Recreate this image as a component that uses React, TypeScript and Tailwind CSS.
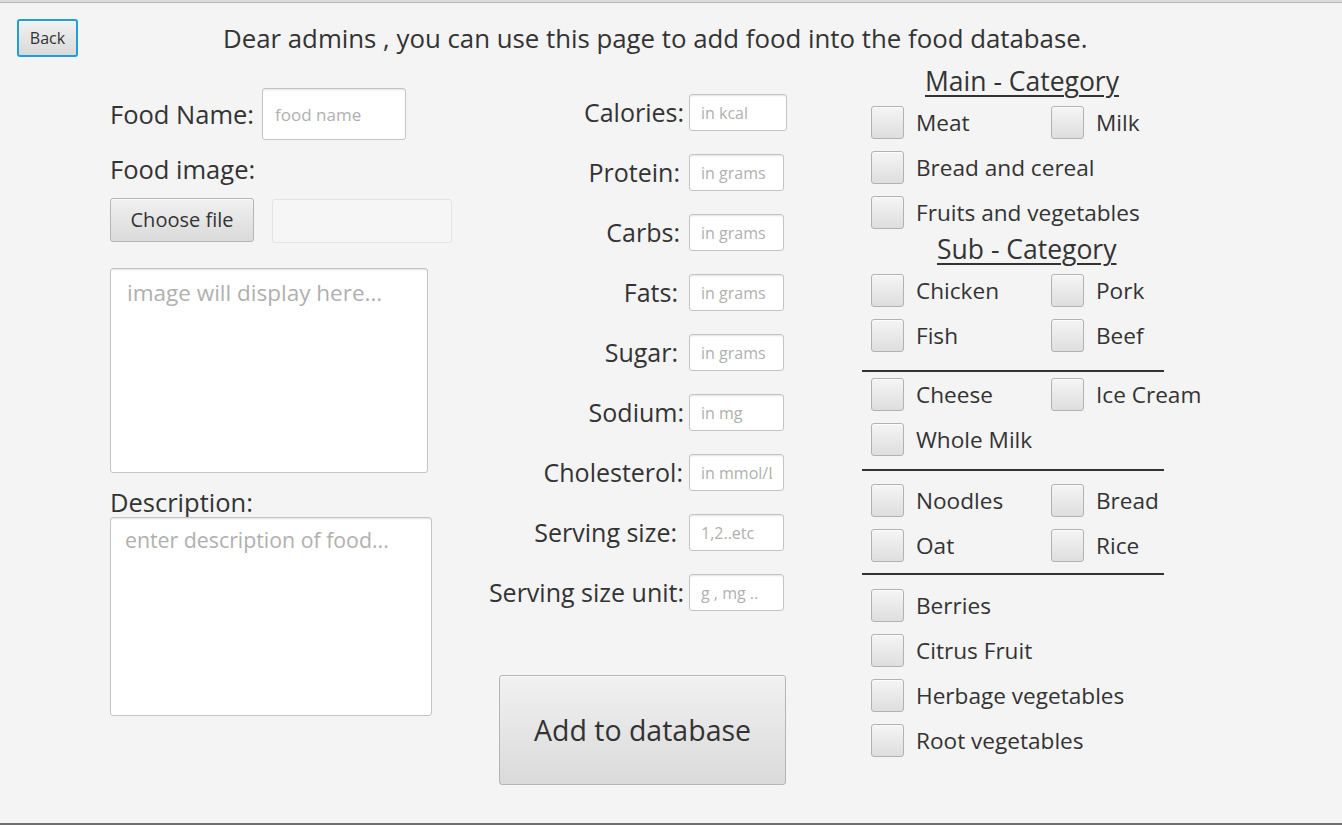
import React from 'react'

interface Nutrient {
  label: string
  ph: string
  gap: string
  input: string
}

const nutrients: Nutrient[] = [
  { label: 'Calories:', ph: 'in kcal', gap: 'pr-[5px]', input: 'w-[98px]' },
  { label: 'Protein:', ph: 'in grams', gap: 'pr-[9px]', input: 'w-[95px] mr-[3px]' },
  { label: 'Carbs:', ph: 'in grams', gap: 'pr-[9px]', input: 'w-[95px] mr-[3px]' },
  { label: 'Fats:', ph: 'in grams', gap: 'pr-[11px]', input: 'w-[95px] mr-[3px]' },
  { label: 'Sugar:', ph: 'in grams', gap: 'pr-[11px]', input: 'w-[95px] mr-[3px]' },
  { label: 'Sodium:', ph: 'in mg', gap: 'pr-[5px]', input: 'w-[95px] mr-[3px]' },
  { label: 'Cholesterol:', ph: 'in mmol/L', gap: 'pr-[6px]', input: 'w-[95px] mr-[3px]' },
  { label: 'Serving size:', ph: '1,2..etc', gap: 'pr-[12px]', input: 'w-[95px] mr-[3px]' },
  { label: 'Serving size unit:', ph: 'g , mg ..', gap: 'pr-[5px]', input: 'w-[95px] mr-[3px]' },
]

const field =
  'bg-white border border-[#c4c4c4] rounded-[3px] shadow-[inset_0_2px_2px_-1px_rgba(0,0,0,0.12)] outline-none text-[#333] placeholder:text-[#b0b0b0]'

const face =
  'rounded-[3px] bg-linear-to-b from-[#f1f1f1] to-[#dadada] shadow-[inset_0_1px_0_#fafafa] text-[#333]'

function Check({ label }: { label: string }) {
  return (
    <label className="flex items-center h-[33px] w-[180px] shrink-0">
      <span className="w-[33px] h-[33px] shrink-0 rounded-[3px] border border-[#b2b2b2] bg-linear-to-b from-[#f5f5f5] to-[#dedede] shadow-[inset_0_1px_0_#fcfcfc]" />
      <span className="ml-[12px] text-[22.6px] text-[#333] whitespace-nowrap">{label}</span>
    </label>
  )
}

function Row({ items }: { items: string[] }) {
  return (
    <div className="flex pl-[9px]">
      {items.map((i) => (
        <Check key={i} label={i} />
      ))}
    </div>
  )
}

export default function App() {
  return (
    <div className="h-[825px] w-full flex flex-col bg-[#f4f4f4] font-['Open_Sans',sans-serif] text-[#333] overflow-hidden">
      <div className="h-[2px] bg-[#dcdcdc]" />
      <div className="h-[1px] bg-[#b9b9b9]" />

      <div className="flex items-center h-[38px] mt-[16px]">
        <button className={`${face} ml-[17px] w-[61px] h-[38px] text-[16px] border-2 border-[#1ea0d6]`}>Back</button>
        <h1 className="ml-[145px] text-[25.8px] whitespace-nowrap">
          Dear admins , you can use this page to add food into the food database.
        </h1>
      </div>

      <div className="flex flex-1 mt-[3px]">
        {/* left */}
        <div className="w-[342px] ml-[110px] flex flex-col">
          <div className="flex items-center mt-[28px] h-[52px]">
            <span className="text-[25.5px] whitespace-nowrap">Food Name:</span>
            <input className={`${field} ml-[8px] w-[144px] h-[52px] px-[12px] text-[17px]`} placeholder="food name" />
          </div>
          <div className="mt-[14px] h-[30px] leading-[30px] text-[25.5px]">Food image:</div>
          <div className="flex mt-[14px] h-[44px]">
            <button className={`${face} border border-[#b5b5b5] w-[144px] h-[44px] text-[20px]`}>Choose file</button>
            <div className="ml-[18px] mt-[1px] w-[180px] h-[44px] rounded-[3px] border border-[#e3e3e3] bg-[#f6f6f6]" />
          </div>
          <textarea
            readOnly
            className={`${field} mt-[26px] w-[318px] h-[205px] resize-none px-[16px] py-[10px] text-[22.5px] leading-[28px]`}
            placeholder="image will display here..."
          />
          <div className="mt-[14px] h-[30px] leading-[30px] text-[25.5px]">Description:</div>
          <textarea
            className={`${field} w-[322px] h-[199px] resize-none px-[14px] py-[8px] text-[21.3px] leading-[28px]`}
            placeholder="enter description of food..."
          />
        </div>

        {/* middle */}
        <div className="w-[335px] flex flex-col mt-[34px] gap-[23px]">
          {nutrients.map((n) => (
            <div key={n.label} className="flex items-center h-[37px]">
              <span className={`flex-1 text-right text-[25px] whitespace-nowrap ${n.gap}`}>{n.label}</span>
              <input className={`${field} ${n.input} h-[37px] px-[11px] text-[16px]`} placeholder={n.ph} />
            </div>
          ))}
          <button className={`${face} border border-[#b5b5b5] mt-[41px] ml-[47px] w-[287px] h-[110px] text-[28.5px]`}>
            Add to database
          </button>
        </div>

        {/* right */}
        <div className="ml-[75px] w-[360px] flex flex-col">
          <div className="mt-[6px] h-[30px] leading-[30px] pl-[63px] text-[26.5px] underline underline-offset-[4px] decoration-[1.5px] whitespace-nowrap">
            Main - Category
          </div>
          <div className="mt-[10px] flex flex-col gap-[12px]">
            <Row items={['Meat', 'Milk']} />
            <Row items={['Bread and cereal']} />
            <Row items={['Fruits and vegetables']} />
          </div>
          <div className="mt-[5px] h-[30px] leading-[30px] pl-[75px] text-[26.5px] underline underline-offset-[4px] decoration-[1.5px] whitespace-nowrap">
            Sub - Category
          </div>
          <div className="mt-[10px] flex flex-col gap-[12px]">
            <Row items={['Chicken', 'Pork']} />
            <Row items={['Fish', 'Beef']} />
          </div>
          <div className="mt-[18px] h-[2px] w-[302px] bg-[#333]" />
          <div className="mt-[6px] flex flex-col gap-[12px]">
            <Row items={['Cheese', 'Ice Cream']} />
            <Row items={['Whole Milk']} />
          </div>
          <div className="mt-[13px] h-[2px] w-[302px] bg-[#333]" />
          <div className="mt-[13px] flex flex-col gap-[12px]">
            <Row items={['Noodles', 'Bread']} />
            <Row items={['Oat', 'Rice']} />
          </div>
          <div className="mt-[11px] h-[2px] w-[302px] bg-[#333]" />
          <div className="mt-[14px] flex flex-col gap-[12px]">
            <Row items={['Berries']} />
            <Row items={['Citrus Fruit']} />
            <Row items={['Herbage vegetables']} />
            <Row items={['Root vegetables']} />
          </div>
        </div>
      </div>

      <div className="h-[2px] bg-[#6f6f6f]" />
    </div>
  )
}
